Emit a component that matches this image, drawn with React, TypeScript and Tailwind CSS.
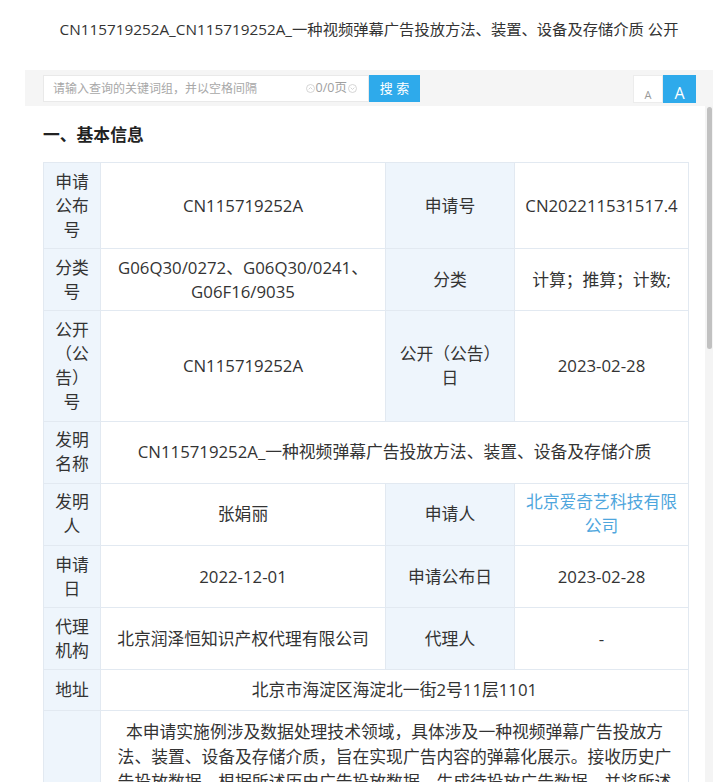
import React from "react";

const cellBase =
  "border border-[#e2e9f1] px-[9px] py-[6.6px] text-center align-middle";
const labelCls = `${cellBase} bg-[#eef5fc]`;
const valCls = `${cellBase} bg-white`;

function CircleChevron({ up }: { up: boolean }) {
  return (
    <svg width="9" height="9" viewBox="0 0 9 9" className="shrink-0">
      <circle cx="4.5" cy="4.5" r="4" fill="none" stroke="#cfcfcf" strokeWidth="0.9" />
      <path
        d={up ? "M2.7 5.3 L4.5 3.5 L6.3 5.3" : "M2.7 3.7 L4.5 5.5 L6.3 3.7"}
        fill="none"
        stroke="#cfcfcf"
        strokeWidth="0.9"
      />
    </svg>
  );
}

export default function App() {
  return (
    <div className="h-[782px] w-full overflow-hidden bg-white font-['Open_Sans','Noto_Sans_CJK_SC',sans-serif] text-[#333]">
      <div className="ml-[25px] mr-[5px] flex h-[782px] flex-col">
        {/* Title */}
        <div className="flex h-[70px] shrink-0 justify-center pt-[19px]">
          <h1 className="text-[15.3px] leading-[20px] font-normal text-[#333]">
            CN115719252A_CN115719252A_一种视频弹幕广告投放方法、装置、设备及存储介质 公开
          </h1>
        </div>

        {/* Toolbar */}
        <div className="flex h-[36px] shrink-0 items-start bg-[#f5f5f5] pl-[18px] pr-[17px] pt-[5px]">
          <div className="flex h-[27px] w-[326px] items-center border border-[#e9e9e9] bg-white pl-[9px] pr-[11px]">
            <input
              placeholder="请输入查询的关键词组，并以空格间隔"
              className="min-w-0 flex-1 bg-transparent text-[12px] text-[#333] outline-none placeholder:text-[#a8a8a8]"
            />
            <div className="flex items-center gap-[1px] text-[12.5px] leading-none text-[#a0a0a0]">
              <CircleChevron up />
              <span>0/0页</span>
              <CircleChevron up={false} />
            </div>
          </div>
          <button className="h-[27px] w-[51px] bg-[#2eaaeb] text-[13px] leading-none text-white">
            搜 索
          </button>
          <div className="ml-auto flex">
            <button className="block h-[28px] w-[30px] border border-[#ececec] bg-white pt-[11px] text-center text-[11px] leading-none text-[#999]">
              A
            </button>
            <button className="block h-[28px] w-[33px] bg-[#2eaaeb] pt-[8px] text-center text-[16px] leading-none text-white">
              A
            </button>
          </div>
        </div>

        {/* Scroll content with scrollbar */}
        <div className="flex min-h-0 flex-1 bg-white">
          <div className="min-w-0 flex-1 overflow-hidden">
            <div className="pl-[18px] pr-[17px] pt-[16px]">
              <h2 className="mb-[14px] text-[16.8px] font-bold leading-[26px] text-[#222]">
                一、基本信息
              </h2>
              <table className="w-[645px] table-fixed border-collapse text-[16.8px] leading-[24px] text-[#333]">
                <colgroup>
                  <col className="w-[57px]" />
                  <col className="w-[285px]" />
                  <col className="w-[129px]" />
                  <col className="w-[174px]" />
                </colgroup>
                <tbody>
                  <tr className="h-[41px]">
                    <td className={labelCls}>申请公布号</td>
                    <td className={valCls}>CN115719252A</td>
                    <td className={labelCls}>申请号</td>
                    <td className={valCls}>CN202211531517.4</td>
                  </tr>
                  <tr className="h-[41px]">
                    <td className={labelCls}>分类号</td>
                    <td className={valCls}>G06Q30/0272、G06Q30/0241、G06F16/9035</td>
                    <td className={labelCls}>分类</td>
                    <td className={valCls}>计算；推算；计数;</td>
                  </tr>
                  <tr className="h-[41px]">
                    <td className={labelCls}>公开（公告）号</td>
                    <td className={valCls}>CN115719252A</td>
                    <td className={labelCls}>公开（公告）日</td>
                    <td className={valCls}>2023-02-28</td>
                  </tr>
                  <tr className="h-[41px]">
                    <td className={labelCls}>发明名称</td>
                    <td className={valCls} colSpan={3}>
                      CN115719252A_一种视频弹幕广告投放方法、装置、设备及存储介质
                    </td>
                  </tr>
                  <tr className="h-[41px]">
                    <td className={labelCls}>发明人</td>
                    <td className={valCls}>张娟丽</td>
                    <td className={labelCls}>申请人</td>
                    <td className={`${valCls} text-[#4ea6dd]`}>
                      <a className="cursor-pointer">北京爱奇艺科技有限公司</a>
                    </td>
                  </tr>
                  <tr className="h-[41px]">
                    <td className={labelCls}>申请日</td>
                    <td className={valCls}>2022-12-01</td>
                    <td className={labelCls}>申请公布日</td>
                    <td className={valCls}>2023-02-28</td>
                  </tr>
                  <tr className="h-[41px]">
                    <td className={labelCls}>代理机构</td>
                    <td className={valCls}>北京润泽恒知识产权代理有限公司</td>
                    <td className={labelCls}>代理人</td>
                    <td className={valCls}>-</td>
                  </tr>
                  <tr className="h-[41px]">
                    <td className={labelCls}>地址</td>
                    <td className={valCls} colSpan={3}>
                      北京市海淀区海淀北一街2号11层1101
                    </td>
                  </tr>
                  <tr>
                    <td className={labelCls}>摘要</td>
                    <td
                      className="border border-[#e2e9f1] bg-white px-[10px] pb-[8px] pt-[8px] text-center align-middle leading-[25px]"
                      colSpan={3}
                    >
                      本申请实施例涉及数据处理技术领域，具体涉及一种视频弹幕广告投放方
                      <br />
                      法、装置、设备及存储介质，旨在实现广告内容的弹幕化展示。接收历史广告投放数据，根据所述历史广告投放数据，生成待投放广告数据，并将所述待投放广告数据；在视频播放过程中，将所述待投放广告数据以弹幕的形式展示在视频播放界面上。本申请实施例能够根据历史广告投放数据生成与视频内容相匹配的弹幕广告，使广告以弹幕的形式融入视频内容，提高广告投放的精准度和用户的接受度，提升广告投放效果。
                    </td>
                  </tr>
                </tbody>
              </table>
            </div>
          </div>
          <div className="w-[8px] shrink-0 bg-[#f4f4f4] pt-[1px]">
            <div className="mx-auto h-[242px] w-[5px] rounded-full bg-[#c1c1c1]" />
          </div>
        </div>
      </div>
    </div>
  );
}
